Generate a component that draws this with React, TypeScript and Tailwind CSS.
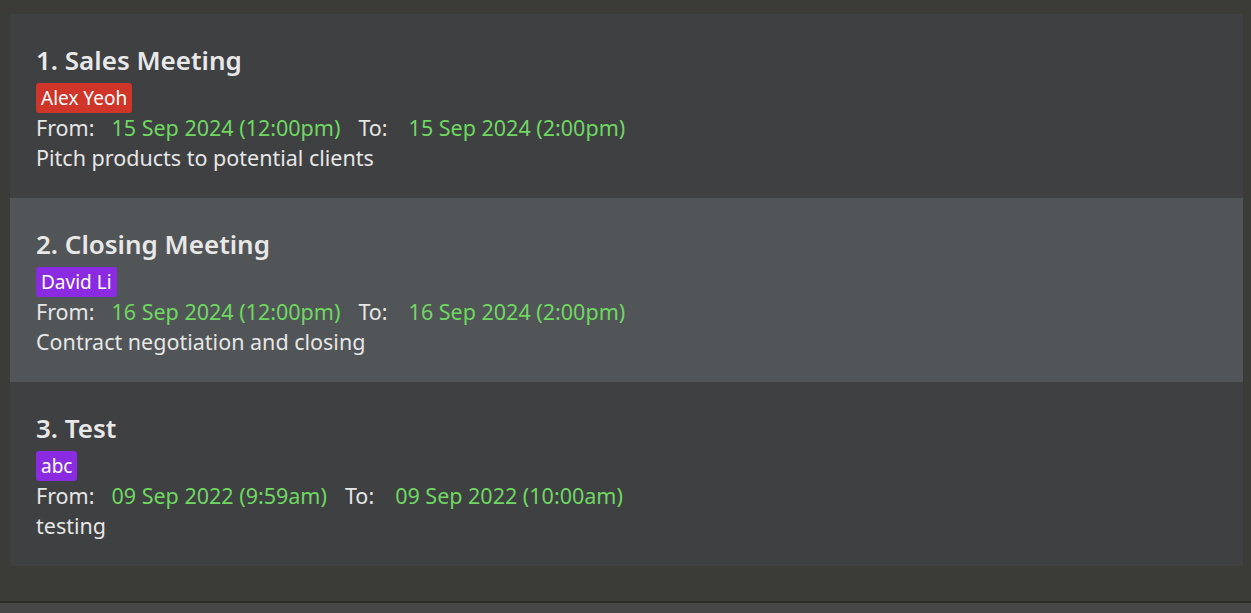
import React from "react";

type Meeting = {
  title: string;
  tag: string;
  tagColor: string;
  from: string;
  to: string;
  desc: string;
  selected?: boolean;
};

const meetings: Meeting[] = [
  {
    title: "1. Sales Meeting",
    tag: "Alex Yeoh",
    tagColor: "bg-[#d0352a]",
    from: "15 Sep 2024 (12:00pm)",
    to: "15 Sep 2024 (2:00pm)",
    desc: "Pitch products to potential clients",
  },
  {
    title: "2. Closing Meeting",
    tag: "David Li",
    tagColor: "bg-[#8a2be2]",
    from: "16 Sep 2024 (12:00pm)",
    to: "16 Sep 2024 (2:00pm)",
    desc: "Contract negotiation and closing",
    selected: true,
  },
  {
    title: "3. Test",
    tag: "abc",
    tagColor: "bg-[#8a2be2]",
    from: "09 Sep 2022 (9:59am)",
    to: "09 Sep 2022 (10:00am)",
    desc: "testing",
  },
];

function MeetingCard({ m }: { m: Meeting }) {
  return (
    <div
      className={`h-[184px] pl-[26px] pt-[27px] ${m.selected ? "bg-[#525557]" : "bg-[#3f4042]"}`}
    >
      <div className="text-[26px] leading-[38px] font-semibold text-[#e8e8e8]">{m.title}</div>
      <div className="mt-[4px] flex">
        <span className={`${m.tagColor} rounded-[3px] px-[5px] h-[30px] leading-[30px] text-[19px] text-white`}>
          {m.tag}
        </span>
      </div>
      <div className="flex h-[30px] items-center text-[21.5px] leading-[30px]">
        <span className="text-[#e6e6e6]">From:</span>
        <span className="ml-[17px] text-[#6ed861]">{m.from}</span>
        <span className="ml-[18px] text-[#e6e6e6]">To:</span>
        <span className="ml-[21px] text-[#6ed861]">{m.to}</span>
      </div>
      <div className="h-[30px] text-[21.5px] leading-[30px] text-[#e6e6e6]">{m.desc}</div>
    </div>
  );
}

export default function App() {
  return (
    <div
      className="flex h-[613px] w-[1251px] flex-col bg-[#3b3b38]"
      style={{ fontFamily: '"Noto Sans", "Open Sans", sans-serif' }}
    >
      <div className="flex-1 pl-[10px] pr-[8px] pt-[14px]">
        {meetings.map((m) => (
          <MeetingCard key={m.title} m={m} />
        ))}
      </div>
      <div className="h-[2px] bg-[#2c2c2b]" />
      <div className="h-[10px] bg-[#474747]" />
    </div>
  );
}
